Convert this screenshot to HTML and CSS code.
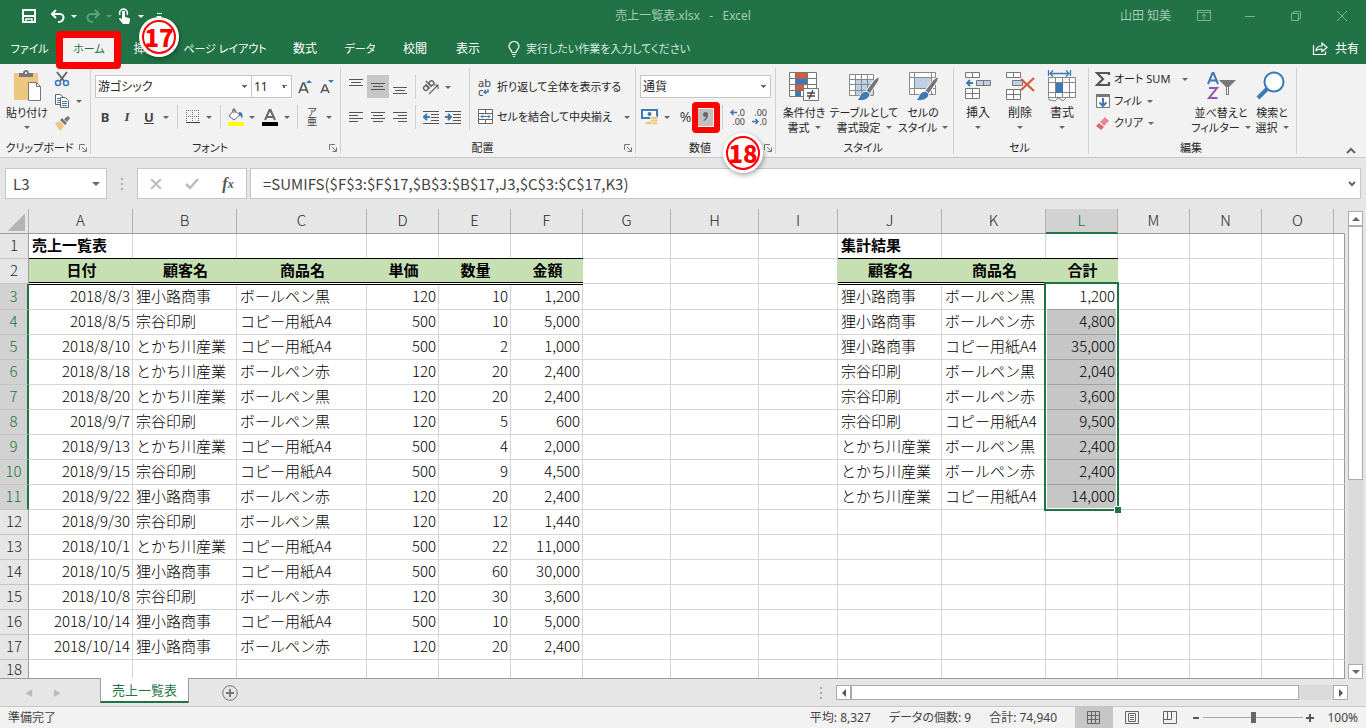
FILE: index.html
```html
<!DOCTYPE html>
<html lang="ja">
<head>
<meta charset="utf-8">
<title>売上一覧表.xlsx - Excel</title>
<link rel="stylesheet" href="styles.css">
</head>
<body>
<header class="top">
  <div class="titlebar">
    <div class="quick">
      <button class="w24" aria-label="上書き保存"><svg width="16" height="16" fill="none" stroke="#fff" stroke-width="2"><path d="M2 2h12v12H2z"/><path d="M2 8h12" /><path d="M5 15v-4h6v4" stroke-width="1.5"/></svg></button>
      <button class="w24 undo" aria-label="元に戻す"><svg width="16" height="16" fill="none" stroke="#fff" stroke-width="2"><path d="M6 2 2 6l4 4M2 6h8c5 0 5 8-2 8"/></svg></button>
      <button class="w8" aria-label="履歴"><i class="caret light"></i></button>
      <button class="w24 redo dim" aria-label="やり直し"><svg width="16" height="16" fill="none" stroke="#fff" stroke-width="2"><path d="M10 2l4 4-4 4M14 6H6c-5 0-5 8 2 8"/></svg></button>
      <button class="w8 dim" aria-label="やり直し履歴"><i class="caret light"></i></button>
      <button class="w22" aria-label="タッチ/マウス モード"><svg width="14" height="18"><path d="M3 8a4 4 0 1 1 7 0" fill="none" stroke="#fff" stroke-width="1.5"/><path d="M5 5c0-1.600 3-1.600 3 0v5l4 1c1 .3 1 1 1 2l-1 4H6l-4-5c0-1 1-1.500 3 0z" fill="#fff"/></svg></button>
      <button class="w12" aria-label="モードの選択"><i class="caret light"></i></button>
      <button class="w24 more" aria-label="その他"><span></span><i class="caret light"></i></button>
    </div>
    <div class="title">売上一覧表.xlsx&nbsp;&nbsp; -&nbsp;&nbsp; Excel</div>
    <div class="window">
      <span class="user">山田 知美</span>
      <button aria-label="リボンの表示オプション"><svg width="14" height="12" fill="none" stroke="#7fb093"><path d="M.5.5h13v10H.5zM.5 2.500h13M7 9.500v-5M4.500 6.500 7 4l2.500 2.500"/></svg></button>
      <button aria-label="最小化"><svg width="12" height="12" stroke="#7fb093"><path d="M1 6.500h10"/></svg></button>
      <button aria-label="元に戻す(縮小)"><svg width="12" height="12" fill="none" stroke="#7fb093"><path d="M1.500 3.500h7v7h-7zM3.500 3V1.500h7v7H9"/></svg></button>
      <button aria-label="閉じる"><svg width="12" height="12" stroke="#7fb093"><path d="M1 1l10 10M11 1 1 11"/></svg></button>
    </div>
  </div>
  <nav class="tabs">
    <a href="#" class="kana">ファイル</a><a href="#" class="active kana">ホーム</a><a href="#">挿入</a><a href="#" class="kana">ページ レイアウト</a><a href="#">数式</a><a href="#" class="kana">データ</a><a href="#">校閲</a><a href="#">表示</a>
    <a href="#" class="tell kana"><svg width="12" height="16" fill="none" stroke="#fff"><path d="M4 11.500C4 9 1 8 1 5.500a5 5 0 0 1 10 0C11 8 8 9 8 11.500zM4 13.500h4M5 15.500h2" stroke-width="1.200"/></svg>実行したい作業を入力してください</a>
    <a href="#" class="share"><svg width="16" height="15" fill="none" stroke="#fff"><path d="M1.500 4v9.500h12v-3M4 10c0-4 3-5 6-5V2l5 4.500-5 4V8C7 8 5 8 4 10z" stroke-width="1.200"/></svg>共有</a>
  </nav>
</header>

<section class="ribbon">
  <div class="group g-clip">
    <div class="body">
      <button class="big clip"><svg width="32" height="32"><path d="M3 3h24v27H3z" fill="#edc77f"/><path d="M8 3h4c0-4 6-4 6 0h4v4H8z" fill="#777"/><circle cx="15" cy="3" r="1" fill="#fff"/><path d="M17.500 12.500h8l4 4v14h-12z" fill="#fff" stroke="#777"/><path d="M25.500 12.500v4h4" fill="none" stroke="#777"/></svg><span>貼り付け</span><i class="caret"></i></button>
      <div class="stack">
        <div class="srow"><button class="w24" aria-label="切り取り"><svg width="16" height="16" fill="none"><path d="M3 1l7 9M13 1 6 10" stroke="#666" stroke-width="2"/><circle cx="4" cy="12" r="2.500" stroke="#3d7ab5" stroke-width="1.500"/><circle cx="12" cy="12" r="2.500" stroke="#3d7ab5" stroke-width="1.500"/></svg></button></div>
        <div class="srow"><button class="w24" aria-label="コピー"><svg width="16" height="16" fill="#fff" stroke="#666"><path d="M1.500 1.500h5l3 3v7h-8z"/><path d="M3 5.500h3M3 7.500h3M3 9.500h3" stroke="#3d7ab5"/><path d="M6.500 4.500h5l3 3v7h-8z"/><path d="M8 8.500h5M8 10.500h5M8 12.500h5" stroke="#3d7ab5"/></svg></button><button class="w10" aria-label="コピーのオプション"><i class="caret"></i></button></div>
        <div class="srow"><button class="w24" aria-label="書式のコピー"><svg width="16" height="16"><path d="M1 8l5-2 4 5-4 5z" fill="#edc77f"/><path d="M6 5l5 5 2-2-5-5zM10 4l4-3 2 2-3 4z" fill="#777"/></svg></button></div>
      </div>
    </div>
    <div class="label"><span>クリップボード</span><svg class="launch" width="8" height="8" fill="none" stroke="#777"><path d="M.5 6V.5H6M3 3l4 4M7.500 3.500v4h-4"/></svg></div>
  </div>

  <div class="group g-font">
    <div class="body rows">
      <div class="row">
        <select class="combo name" aria-label="フォント"><option>游ゴシック</option></select><select class="combo size" aria-label="フォント サイズ"><option>11</option></select>
        <button class="w24 grow" aria-label="フォント サイズの拡大"><svg width="16" height="16"><path d="M2 14 6 4h1l4 10M3.500 11h6" fill="none" stroke="#555" stroke-width="1.700"/><path d="M9 4l3-3 3 3z" fill="#3d7ab5"/></svg></button><button class="w20" aria-label="フォント サイズの縮小"><svg width="16" height="16"><path d="M2 14 5.500 6h1L10 14M3.500 11.500h5" fill="none" stroke="#555" stroke-width="1.500"/><path d="M9 1h6l-3 3z" fill="#3d7ab5"/></svg></button>
      </div>
      <div class="row">
        <button class="w22 b">B</button><button class="w22 it">I</button><button class="w22 u">U</button><button class="w12" aria-label="下線の種類"><i class="caret"></i></button><i class="sep w10"></i>
        <button class="w22" aria-label="罫線"><svg width="14" height="14" stroke="#777"><path d="M.5 0v12M6.500 0v12M12.500 0v12M0 .5h13M0 6.500h13" stroke-dasharray="1 1"/><path d="M0 12.500h14" stroke="#444"/></svg></button><button class="w10" aria-label="罫線の種類"><i class="caret"></i></button><i class="sep w12"></i>
        <button class="w20" aria-label="塗りつぶしの色"><svg width="18" height="18"><path d="M7 2l6 5-6 5-5-4z" fill="#fff" stroke="#666"/><path d="M6 5V1h2v4" fill="none" stroke="#666"/><path d="M12 4c4 0 4 3 3 7-1-3-2-4-3-4z" fill="#3d7ab5"/><path d="M1 14h16v4H1z" fill="#ff0"/></svg></button><button class="w12" aria-label="塗りつぶしの色を選択"><i class="caret"></i></button>
        <button class="w24" aria-label="フォントの色"><svg width="18" height="18"><path d="M4 12 8.500 2h1L14 12M5.500 9h7" fill="none" stroke="#666" stroke-width="2"/><path d="M1 14h16v4H1z"/></svg></button><button class="w10" aria-label="フォントの色を選択"><i class="caret"></i></button><i class="sep w10"></i>
        <button class="w20 ruby"><span>ア</span><span>亜</span></button><button class="w14" aria-label="ふりがなの設定"><i class="caret"></i></button>
      </div>
    </div>
    <div class="label"><span>フォント</span><svg class="launch" width="8" height="8" fill="none" stroke="#777"><path d="M.5 6V.5H6M3 3l4 4M7.500 3.500v4h-4"/></svg></div>
  </div>

  <div class="group g-align">
    <div class="body">
      <div class="rows left">
        <div class="row">
          <button class="w22" aria-label="上揃え"><svg width="14" height="16" stroke="#555"><path d="M0 .5h14M2 3.500h10M0 6.500h14"/></svg></button><button class="w22 on" aria-label="上下中央揃え"><svg width="14" height="16" stroke="#555"><path d="M0 4.500h14M2 7.500h10M0 10.500h14"/></svg></button><button class="w22" aria-label="下揃え"><svg width="14" height="16" stroke="#555"><path d="M0 8.500h14M2 11.500h10M0 14.500h14"/></svg></button><i class="sep w8"></i>
          <button class="w22 gap" aria-label="方向"><svg width="18" height="18" fill="none" stroke="#666" stroke-width="1.500"><g transform="rotate(-45 6 8)"><circle cx="3" cy="8" r="2.300"/><path d="M5.500 5v6M8 3v8"/><circle cx="10.500" cy="8.500" r="2.300"/></g><path d="M7 16 16 7M12 7h4v4" stroke-width="1.200"/></svg></button><button class="w12" aria-label="方向の設定"><i class="caret"></i></button>
        </div>
        <div class="row">
          <button class="w22" aria-label="左揃え"><svg width="14" height="12" stroke="#555"><path d="M0 1.500h14M0 4.500h9M0 7.500h14M0 10.500h9"/></svg></button><button class="w22" aria-label="中央揃え"><svg width="14" height="12" stroke="#555"><path d="M0 1.500h14M2 4.500h10M0 7.500h14M2 10.500h10"/></svg></button><button class="w22" aria-label="右揃え"><svg width="14" height="12" stroke="#555"><path d="M0 1.500h14M5 4.500h9M0 7.500h14M5 10.500h9"/></svg></button><i class="sep w8"></i>
          <button class="w22 gap" aria-label="インデントを減らす"><svg width="16" height="14" stroke="#555"><path d="M0 1.500h16M8 4.500h8M8 7.500h8M8 10.500h8M0 13.500h16"/><path d="M7 7H1M4 4 1 7l3 3" fill="none" stroke="#3d7ab5" stroke-width="2"/></svg></button><button class="w22" aria-label="インデントを増やす"><svg width="16" height="14" stroke="#555"><path d="M0 1.500h16M8 4.500h8M8 7.500h8M8 10.500h8M0 13.500h16"/><path d="M0 7h6M3 4l3 3-3 3" fill="none" stroke="#3d7ab5" stroke-width="2"/></svg></button>
        </div>
      </div>
      <div class="rows right">
        <div class="row"><button class="wide"><span class="abc"><span>ab</span><span>c<svg width="6" height="6" fill="none" stroke="#3d7ab5" stroke-width="1.300"><path d="M5 0v3H1M3 1 1 3l2 2"/></svg></span></span>折り返して全体を表示する</button></div>
        <div class="row"><button class="wide"><svg width="16" height="16" fill="#fff" stroke="#666"><path d="M.5.5h14v14H.5zM.5 4.500h14M.5 10.500h14M7.500.5v4M7.500 10.500v4"/><path d="M3 7.500h9M5 5.500l-2 2 2 2M10 5.500l2 2-2 2" fill="none" stroke="#3d7ab5"/></svg>セルを結合して中央揃え</button><button class="w10 last" aria-label="結合の種類"><i class="caret"></i></button></div>
      </div>
    </div>
    <div class="label"><span>配置</span><svg class="launch" width="8" height="8" fill="none" stroke="#777"><path d="M.5 6V.5H6M3 3l4 4M7.500 3.500v4h-4"/></svg></div>
  </div>

  <div class="group g-num">
    <div class="body rows">
      <div class="row"><select class="combo fmt" aria-label="数値の書式"><option>通貨</option></select></div>
      <div class="row">
        <button class="w22" aria-label="通貨表示形式"><svg width="18" height="18"><path d="M1 2h15v8H1z" fill="#fff" stroke="#3d7ab5" stroke-width="2"/><circle cx="8.500" cy="6" r="2" fill="#3d7ab5"/><g fill="#edc77f" stroke="#f2f2f2" stroke-width=".7"><ellipse cx="13" cy="15" rx="4" ry="1.800"/><ellipse cx="13" cy="12.500" rx="4" ry="1.800"/><ellipse cx="13" cy="10" rx="4" ry="1.800"/><ellipse cx="8" cy="15" rx="4" ry="1.800"/></g></svg></button><button class="w12" aria-label="通貨の選択"><i class="caret"></i></button><button class="pct">%</button><button class="comma" aria-label="桁区切りスタイル"><svg width="6" height="10"><path d="M0 2.500a2.500 2.500 0 0 1 5 0c0 3-1 5-4 6.500l-.5-1C2 7 3 6 3 5 1 5.200 0 4 0 2.500z" fill="#666"/></svg></button><i class="sep w8"></i>
        <button class="w22 dec" aria-label="小数点以下の表示桁数を増やす"><span><svg width="7" height="7" fill="none" stroke="#3d7ab5" stroke-width="1.500"><path d="M7 3.500H1M3.500 1 1 3.500 3.500 6"/></svg>.0</span><span>.00</span></button><button class="w22 dec" aria-label="小数点以下の表示桁数を減らす"><span>.00</span><span><svg width="7" height="7" fill="none" stroke="#3d7ab5" stroke-width="1.500"><path d="M0 3.500h6M3.500 1 6 3.500 3.500 6"/></svg>.0</span></button>
      </div>
    </div>
    <div class="label"><span>数値</span><svg class="launch" width="8" height="8" fill="none" stroke="#777"><path d="M.5 6V.5H6M3 3l4 4M7.500 3.500v4h-4"/></svg></div>
  </div>

  <div class="group g-style">
    <div class="body">
      <button class="big s1"><svg width="32" height="32"><path d="M1.500 2.500h27v24h-27z" fill="#fff"/><path d="M8 3h11v5H8zM8 14h8v6H8z" fill="#d65b3b"/><path d="M8 8h11v6H8zM8 20h5v6H8z" fill="#3d7ab5"/><path d="M1.500 2.500h27v24h-27zM7.500 2v24M19.500 2v24M1 8.500h27M1 14.500h27M1 20.500h27" fill="none" stroke="#777"/><path d="M15.500 18.500h15v12h-15z" fill="#fff" stroke="#777"/><path d="M19 23h8M19 26h8M25 20l-4 9" stroke="#444" stroke-width="1.300"/></svg><span>条件付き</span><span>書式<i class="caret"></i></span></button>
      <button class="big s2"><svg width="32" height="32"><path d="M1.500 4.500h24v21h-24z" fill="#fff"/><path d="M8 10h18v15H8z" fill="#bcd1e8"/><path d="M1.500 4.500h24v21h-24zM7.500 4v21M13.500 4v21M19.500 4v21M1 9.500h24M1 14.500h24M1 20.500h24" fill="none" stroke="#888"/><path d="M30 7c2 0 1 3 0 5l-9 13-4-3 9-12z" fill="#777" stroke="#fff"/><path d="M20 22c3 2 2 4 0 6-3 3-8 3-12 2 4-1 3-4 5-6 2-3 5-3 7-2z" fill="#3d7ab5" stroke="#fff"/></svg><span>テーブルとして</span><span>書式設定<i class="caret"></i></span></button>
      <button class="big s3"><svg width="32" height="32"><path d="M2.500 2.500h26v22h-26z" fill="#fff"/><path d="M8 8h16v11H8z" fill="#bcd1e8"/><path d="M2.500 2.500h26v22h-26zM7.500 2v22M24.500 2v22M2 7.500h26M2 18.500h26" fill="none" stroke="#888"/><path d="M30 7c2 0 1 3 0 5l-9 13-4-3 9-12z" fill="#777" stroke="#fff"/><path d="M20 22c3 2 2 4 0 6-3 3-8 3-12 2 4-1 3-4 5-6 2-3 5-3 7-2z" fill="#3d7ab5" stroke="#fff"/></svg><span>セルの</span><span>スタイル<i class="caret"></i></span></button>
    </div>
    <div class="label"><span>スタイル</span></div>
  </div>

  <div class="group g-cell">
    <div class="body">
      <button class="big c1"><svg width="32" height="32"><path d="M3.500 2.500h14v5h-14zM10.500 2v5M3.500 18.500h14v10h-14zM10.500 18v10M3 23.500h14" fill="#fff" stroke="#777"/><path d="M14.500 10.500h14v5h-14zM21.500 10v5" fill="#bcd1e8" stroke="#777"/><path d="M11 13H5M8 10l-3 3 3 3" fill="none" stroke="#3d7ab5" stroke-width="1.800"/></svg><span>挿入</span><i class="caret"></i></button>
      <button class="big c1"><svg width="32" height="32"><path d="M2.500 2.500h14v5h-14zM9.500 2v5M2.500 19.500h14v10h-14zM9.500 19v10M2 24.500h14" fill="#fff" stroke="#777"/><path d="M8.500 10.500h10v5h-10z" fill="#bcd1e8" stroke="#777"/><path d="M17 9l13 12M30 8 17 20" stroke="#d65b3b" stroke-width="2.300"/></svg><span>削除</span><i class="caret"></i></button>
      <button class="big c1"><svg width="32" height="32"><path d="M2.500 0v6M24.500 0v6M4 3.500h19M7 .5l-3 3 3 3M20 .5l3 3-3 3" fill="none" stroke="#3d7ab5" stroke-width="1.300"/><path d="M2.500 7.500h27v20h-27z" fill="#fff"/><path d="M2.500 7.500h27v20h-27zM9.500 7v20M16.500 7v20M23.500 7v20M2 12.500h27M2 22.500h27M3 27v3l6 1 3-3 5 3 3-3" fill="none" stroke="#888"/><path d="M10 13h7v10h-7z" fill="#3d7ab5"/></svg><span>書式</span><i class="caret"></i></button>
    </div>
    <div class="label"><span>セル</span></div>
  </div>

  <div class="group g-edit">
    <div class="body">
      <div class="stack edit">
        <div class="srow"><button class="txt"><svg width="16" height="16"><path d="M14 4V2H2l6 6-6 6h12v-3" fill="none" stroke="#555" stroke-width="2.200"/></svg>オート SUM</button><button class="w12" aria-label="オート SUM の種類"><i class="caret"></i></button></div>
        <div class="srow"><button class="txt"><svg width="16" height="16"><path d="M1.500 1.500h13v13h-13z" fill="#fff" stroke="#777"/><path d="M1 1h14v3H1z" fill="#777"/><path d="M8 5v8M4.500 9.500 8 13l3.500-3.500" fill="none" stroke="#3d7ab5" stroke-width="2"/></svg>フィル<i class="caret"></i></button></div>
        <div class="srow"><button class="txt"><svg width="16" height="16"><path d="M1 11l3-3 5 4-3 3z" fill="#d96a7e"/><path d="M5 7l5-5 4 4-5 5z" fill="#e8869a"/></svg>クリア<i class="caret"></i></button></div>
      </div>
      <button class="big e1"><svg width="32" height="32" fill="none"><path d="M3 14 7.500 3h1L13 14M5 10.500h6" stroke="#3d7ab5" stroke-width="2"/><path d="M4 18h8l-8 10h8.500" stroke="#8e56b3" stroke-width="2"/><path d="M14 10h17l-7 7v8h-3v-8z" fill="#777"/><path d="M22.500 17v7" stroke="#fff"/></svg><span>並べ替えと</span><span>フィルター<i class="caret"></i></span></button>
      <button class="big e2"><svg width="32" height="32"><circle cx="18" cy="12" r="9.500" fill="#fff" stroke="#3d7ab5" stroke-width="2"/><path d="M11 19 2 28" stroke="#3d7ab5" stroke-width="4"/></svg><span>検索と</span><span>選択<i class="caret"></i></span></button>
    </div>
    <div class="label"><span>編集</span></div>
  </div>
  <button class="collapse" aria-label="リボンを折りたたむ"><svg width="10" height="7" fill="none" stroke="#666" stroke-width="2"><path d="M1 6l4-4 4 4"/></svg></button>
</section>

<section class="formula">
  <div class="box namebox"><input value="L3" aria-label="名前ボックス"><button aria-label="名前の一覧"><i class="caret wide-caret"></i></button></div>
  <span class="dots"></span>
  <div class="box fx">
    <button aria-label="キャンセル"><svg width="12" height="12" stroke="#bbb" stroke-width="1.800"><path d="M1 1l10 10M11 1 1 11"/></svg></button><button aria-label="入力"><svg width="14" height="12" fill="none" stroke="#bbb" stroke-width="2.500"><path d="M1 6l4 4 8-9"/></svg></button><button class="fxb" aria-label="関数の挿入">f<small>x</small></button>
  </div>
  <div class="box expr"><input value="=SUMIFS($F$3:$F$17,$B$3:$B$17,J3,$C$3:$C$17,K3)" aria-label="数式バー"><button aria-label="数式バーの展開"><svg width="8" height="6" fill="none" stroke="#666" stroke-width="2"><path d="M1 1l3 3 3-3"/></svg></button></div>
</section>

<main class="sheet">
  <div class="viewport">
  <table>
    <colgroup><col class="k0"><col class="k104"><col class="k104"><col class="k130"><col class="k72"><col class="k72"><col class="k72"><col class="k88"><col class="k88"><col class="k79"><col class="k104"><col class="k104"><col class="k72"><col class="k72"><col class="k72"><col class="k72"><col></colgroup>
    <thead><tr><th class="corner"><th>A<th>B<th>C<th>D<th>E<th>F<th>G<th>H<th>I<th>J<th>K<th class="cur">L<th>M<th>N<th>O<th></tr></thead>
    <tbody>
    <tr class="r1"><th>1<td class="t ln">売上一覧表<td class="ln"><td class="ln"><td class="ln"><td class="ln"><td class="ln"><td><td><td><td class="t ln">集計結果<td class="ln"><td class="ln"><td><td><td><td></tr>
    <tr class="r2"><th>2<td class="h">日付<td class="h">顧客名<td class="h">商品名<td class="h">単価<td class="h">数量<td class="h">金額<td><td><td><td class="h">顧客名<td class="h">商品名<td class="h">合計<td><td><td><td></tr>
    <tr class="r3 s"><th>3<td class="n">2018/8/3<td>狸小路商事<td>ボールペン黒<td class="n">120<td class="n">10<td class="n">1,200<td><td><td><td>狸小路商事<td>ボールペン黒<td class="n first">1,200<div class="range"></div><td><td><td><td></tr>
    <tr class="s"><th>4<td class="n">2018/8/5<td>宗谷印刷<td>コピー用紙A4<td class="n">500<td class="n">10<td class="n">5,000<td><td><td><td>狸小路商事<td>ボールペン赤<td class="n q">4,800<td><td><td><td></tr>
    <tr class="s"><th>5<td class="n">2018/8/10<td>とかち川産業<td>コピー用紙A4<td class="n">500<td class="n">2<td class="n">1,000<td><td><td><td>狸小路商事<td>コピー用紙A4<td class="n q">35,000<td><td><td><td></tr>
    <tr class="s"><th>6<td class="n">2018/8/18<td>とかち川産業<td>ボールペン赤<td class="n">120<td class="n">20<td class="n">2,400<td><td><td><td>宗谷印刷<td>ボールペン黒<td class="n q">2,040<td><td><td><td></tr>
    <tr class="s"><th>7<td class="n">2018/8/20<td>とかち川産業<td>ボールペン黒<td class="n">120<td class="n">20<td class="n">2,400<td><td><td><td>宗谷印刷<td>ボールペン赤<td class="n q">3,600<td><td><td><td></tr>
    <tr class="s"><th>8<td class="n">2018/9/7<td>宗谷印刷<td>ボールペン黒<td class="n">120<td class="n">5<td class="n">600<td><td><td><td>宗谷印刷<td>コピー用紙A4<td class="n q">9,500<td><td><td><td></tr>
    <tr class="s"><th>9<td class="n">2018/9/13<td>とかち川産業<td>コピー用紙A4<td class="n">500<td class="n">4<td class="n">2,000<td><td><td><td>とかち川産業<td>ボールペン黒<td class="n q">2,400<td><td><td><td></tr>
    <tr class="s"><th>10<td class="n">2018/9/15<td>宗谷印刷<td>コピー用紙A4<td class="n">500<td class="n">9<td class="n">4,500<td><td><td><td>とかち川産業<td>ボールペン赤<td class="n q">2,400<td><td><td><td></tr>
    <tr class="s"><th>11<td class="n">2018/9/22<td>狸小路商事<td>ボールペン赤<td class="n">120<td class="n">20<td class="n">2,400<td><td><td><td>とかち川産業<td>コピー用紙A4<td class="n q">14,000<td><td><td><td></tr>
    <tr><th>12<td class="n">2018/9/30<td>宗谷印刷<td>ボールペン黒<td class="n">120<td class="n">12<td class="n">1,440<td><td><td><td><td><td><td><td><td><td></tr>
    <tr><th>13<td class="n">2018/10/1<td>とかち川産業<td>コピー用紙A4<td class="n">500<td class="n">22<td class="n">11,000<td><td><td><td><td><td><td><td><td><td></tr>
    <tr><th>14<td class="n">2018/10/5<td>狸小路商事<td>コピー用紙A4<td class="n">500<td class="n">60<td class="n">30,000<td><td><td><td><td><td><td><td><td><td></tr>
    <tr><th>15<td class="n">2018/10/8<td>宗谷印刷<td>ボールペン赤<td class="n">120<td class="n">30<td class="n">3,600<td><td><td><td><td><td><td><td><td><td></tr>
    <tr><th>16<td class="n">2018/10/14<td>狸小路商事<td>コピー用紙A4<td class="n">500<td class="n">10<td class="n">5,000<td><td><td><td><td><td><td><td><td><td></tr>
    <tr><th>17<td class="n">2018/10/14<td>狸小路商事<td>ボールペン赤<td class="n">120<td class="n">20<td class="n">2,400<td><td><td><td><td><td><td><td><td><td></tr>
    <tr class="end"><th>18<td><td><td><td><td><td><td><td><td><td><td><td><td><td><td><td></tr>
    </tbody>
  </table>
  </div>
  <div class="vscroll"><button class="sb" aria-label="上へ"><i class="caret up"></i></button><div class="track"><div class="thumb"></div></div><button class="sb" aria-label="下へ"><i class="caret wide-caret"></i></button></div>
</main>

<section class="sheetbar">
  <button class="nav" aria-label="前のシート">◀</button><button class="nav" aria-label="次のシート">▶</button>
  <button class="sheettab">売上一覧表</button>
  <button class="add" aria-label="新しいシート"><svg width="16" height="16" fill="none" stroke="#777"><circle cx="8" cy="8" r="7.300"/><path d="M4 8h8M8 4v8" stroke-width="2"/></svg></button>
  <span class="dots hd"></span>
  <div class="hscroll"><button class="sb" aria-label="左へ"><i class="caret lt"></i></button><div class="htrack"><div class="hthumb"></div></div><button class="sb" aria-label="右へ"><i class="caret rt"></i></button></div>
</section>

<footer class="status">
  <span>準備完了</span>
  <div class="stats"><span>平均: 8,327</span><span>データの個数: 9</span><span>合計: 74,940</span></div>
  <button class="view on" aria-label="標準"><svg width="14" height="14" fill="none" stroke="#666"><path d="M.5.5h12v12H.5zM4.500 0v13M8.500 0v13M0 4.500h13M0 8.500h13"/></svg></button><button class="view" aria-label="ページ レイアウト"><svg width="14" height="14" fill="none" stroke="#666"><path d="M.5.5h13v12H.5zM3.500 2.500h7v8h-7zM5 4.500h4M5 6.500h4M5 8.500h4"/></svg></button><button class="view" aria-label="改ページ プレビュー"><svg width="14" height="14" fill="none" stroke="#666"><path d="M.5.5h13v12H.5zM.5 8.500h8V.5M4.500 0v8"/></svg></button>
  <button class="z" aria-label="縮小"><svg width="8" height="8" stroke="#555" stroke-width="2"><path d="M1 4h6"/></svg></button><input type="range" min="10" max="190" value="100" aria-label="ズーム"><button class="z" aria-label="拡大"><svg width="8" height="8" stroke="#555" stroke-width="2"><path d="M0 4h8M4 0v8"/></svg></button>
  <span class="pc">100%</span>
</footer>

<div class="frame f17"></div><div class="badge b17">17</div>
<div class="frame f18"></div><div class="badge b18">18</div>
</body>
</html>
```

FILE: styles.css
```css
* { box-sizing: border-box; }
body {
  margin: 0;
  height: 100vh;
  display: flex;
  flex-direction: column;
  position: relative;
  overflow: hidden;
  background: #e6e6e6;
  color: #262626;
  font: 12px/16px "Noto Sans", "Noto Sans CJK JP", sans-serif;
  font-feature-settings: "palt";
}
button, input, select { font: inherit; color: inherit; font-feature-settings: inherit; }
button {
  border: 0;
  padding: 0;
  background: none;
  display: flex;
  align-items: center;
  justify-content: center;
  white-space: nowrap;
  flex: none;
}
svg { flex: none; }
a { color: inherit; text-decoration: none; }
.caret { display: block; width: 0; height: 0; border: 3px solid transparent; border-top-color: #666; border-bottom: 0; flex: none; }
.caret.light { border-width: 3px; border-bottom: 0; border-top-color: #fff; }
.caret.up { border: 4px solid transparent; border-top: 0; border-bottom-color: #666; }
.caret.lt { border: 4px solid transparent; border-left: 0; border-right-color: #555; }
.caret.rt { border: 4px solid transparent; border-right: 0; border-left-color: #555; }
.wide-caret { border-width: 4px; border-bottom: 0; }
.w8 { width: 8px; }
.w10 { width: 10px; }
.w12 { width: 12px; }
.w14 { width: 14px; }
.w20 { width: 20px; }
.w22 { width: 22px; }
.w24 { width: 24px; }

/* title bar and tabs */
.top { flex: none; background: #217346; color: #fff; }
.titlebar { height: 32px; display: grid; grid-template-columns: 1fr auto 1fr; align-items: center; }
.quick { display: flex; align-items: center; padding-left: 17px; }
.undo { margin-left: 5px; }
.redo { margin-left: 3px; }
.dim { opacity: .3; }
.more { flex-direction: column; gap: 2px; }
.more span { width: 5px; height: 1px; background: #fff; }
.title { color: #a6cab5; white-space: pre; }
.window { display: flex; align-items: center; justify-content: flex-end; padding-right: 1px; }
.window button { width: 46px; height: 24px; }
.user { color: #a6cab5; margin-right: 10px; }
.tabs { height: 32px; display: grid; grid-template-columns: 59px 60px 53px 106px 54px 56px 54px 52px auto 1fr; align-items: stretch; }
.tabs a { display: flex; align-items: center; justify-content: center; white-space: nowrap; padding-top: 1px; }
.tabs .kana { font-size: 11px; }
.tabs .active { background: #f2f2f2; color: #217346; margin-top: 4px; padding-bottom: 4px; }
.tabs .tell { gap: 6px; padding-left: 14px; color: #d9ebe0; }
.tabs .share { justify-content: flex-end; gap: 7px; padding-right: 7px; }

/* ribbon */
.ribbon { flex: none; height: 94px; display: flex; padding: 4px 0 3px; background: #f2f2f2; border-bottom: 1px solid #c8c8c8; }
.group { flex: none; display: flex; flex-direction: column; border-right: 1px solid #d0d0d0; }
.g-clip { width: 91px; }
.g-font { width: 250px; }
.g-align { width: 295px; }
.g-num { width: 140px; }
.g-style { width: 178px; }
.g-cell { width: 135px; }
.g-edit { width: 208px; }
.body { flex: 1; display: flex; }
.label { height: 12px; font-size: 11px; line-height: 12px; display: flex; align-items: center; padding-right: 3px; }
.label span { flex: 1; text-align: center; white-space: nowrap; }
.rows { display: flex; flex-direction: column; gap: 6px; padding-top: 7px; }
.row { display: flex; height: 24px; }
.g-font .rows, .g-num .rows { padding-left: 3px; }
.sep { display: block; background: linear-gradient(#d0d0d0, #d0d0d0) center / 1px 100% no-repeat; }
.combo {
  appearance: none;
  height: 23px;
  padding: 0 2px;
  border: 1px solid #c6c6c6;
  border-radius: 0;
  background:
    linear-gradient(225deg, transparent 50%, #666 50%) right 4px center / 3px 3px no-repeat,
    linear-gradient(135deg, transparent 50%, #666 50%) right 7px center / 3px 3px no-repeat, #fff;
  background:
    conic-gradient(from -45deg at 50% 100%, #666 90deg, transparent 0) right 4px center / 6px 3px no-repeat, #fff;
}
.name { width: 157px; margin-left: 1px; }
.size { width: 41px; margin-left: -1px; }
.fmt { width: 131px; margin-left: 1px; }
.grow { margin-left: 1px; }
.b, .it, .u { color: #444; font-size: 13px; font-weight: 700; }
.it { font-family: "Liberation Serif", serif; font-style: italic; }
.u { text-decoration: underline; }
.ruby { flex-direction: column; font-size: 10px; line-height: 9px; color: #444; }
.left { width: 128px; padding-left: 4px; }
.gap { margin-left: 1px; }
.on { background: #c6c6c6; }
.left .on { height: 23px; }
.right { padding-left: 8px; border-left: 1px solid #d0d0d0; height: 62px; }
.wide { gap: 3px; justify-content: flex-start; font-size: 11px; }
.last { margin-left: auto; }
.right .row { width: 154px; }
.abc { width: 16px; font: 11px/9px "Noto Sans", sans-serif; color: #444; }
.abc span { display: flex; align-items: center; }
.pct { width: 25px; font-size: 14px; color: #444; }
.comma { width: 15px; height: 17px; align-self: center; background: #c0c0c0; }
.dec { flex-direction: column; align-items: flex-end; padding-right: 3px; font-size: 9px; line-height: 9px; color: #444; }
.dec span { display: flex; align-items: center; }
.g-num .sep { margin-left: 5px; }
.big { flex-direction: column; justify-content: flex-start; font-size: 11px; line-height: 15px; padding-top: 2px; }
.big svg { margin-bottom: 3px; }
.big span { display: flex; align-items: center; gap: 5px; }
.big > .caret { margin-top: 6px; }
.clip { width: 50px; padding-left: 4px; }
.stack { display: flex; flex-direction: column; }
.srow { display: flex; height: 22px; }
.g-style .body { padding-left: 1px; }
.s1 { width: 54px; }
.s2 { width: 66px; }
.s3 { width: 52px; }
.g-cell .body { padding-left: 3px; }
.c1 { width: 42px; font-size: 12px; }
.edit { width: 96px; }
.g-edit .body { padding-left: 6px; }
.edit .srow { justify-content: space-between; }
.txt { gap: 3px; font-size: 11px; }
.txt .caret { margin-left: 2px; }
.e1 { width: 60px; }
.e2 { width: 42px; }
.collapse { margin: auto 10px 0 auto; }

/* formula bar */
.formula { flex: none; height: 51px; display: flex; align-items: center; padding: 0 5px; font: 15px/20px "Noto Sans CJK JP", sans-serif; color: #444; }
.box { display: flex; height: 31px; background: #fff; border: 1px solid #c6c6c6; }
.box input { border: 0; padding: 0; background: none; min-width: 0; flex: 1; outline: 0; }
.namebox { width: 102px; padding-left: 7px; }
.namebox button { width: 20px; }
.dots { width: 30px; height: 12px; background: repeating-linear-gradient(#aaa 0 2px, transparent 2px 5px) center / 2px 12px no-repeat; }
.fx { width: 110px; justify-content: space-around; }
.fx button { width: 34px; }
.fx .fxb { font: italic 700 16px/16px "Liberation Serif", serif; color: #555; }
.fxb small { font-size: 12px; }
.expr { flex: 1; margin-left: 3px; padding-left: 12px; }
.expr input { font-feature-settings: normal; }
.expr button { width: 17px; }

/* worksheet */
.sheet { flex: 1; min-height: 0; display: flex; }
.viewport { flex: 1; min-width: 0; overflow: hidden; border-bottom: 1px solid #9b9b9b; }
table { width: 100%; table-layout: fixed; border-collapse: separate; border-spacing: 0; font: 15px/20px "Noto Sans CJK JP", sans-serif; font-feature-settings: normal; color: #000; font-weight: 300; }
.k0 { width: 29px; }
.k72 { width: 72px; }
.k79 { width: 79px; }
.k88 { width: 88px; }
.k104 { width: 104px; }
.k130 { width: 130px; }
tr { height: 25px; }
.r3 { height: 26px; }
th, td { padding: 0 0 2px; border-right: 1px solid #d4d4d4; border-bottom: 1px solid #d4d4d4; white-space: nowrap; font-weight: inherit; }
td { background: #fff; padding: 0 2px 2px 3px; line-height: 20px; }
thead th { border-bottom-color: #9b9b9b; border-right-color: #b1b1b1; color: #262626; }
thead th:last-child { border-right-color: transparent; }
tbody th { border-right-color: #9b9b9b; border-bottom-color: #c4c4c4; color: #262626; }
td:last-child { border-right-color: #9b9b9b; }
.corner { background: linear-gradient(135deg, transparent 50%, #b4b4b4 50%) 8px 5px / 17px 17px no-repeat; }
.cur { background: #d2d2d2; color: #217346; border-bottom: 2px solid #217346; padding-bottom: 1px; }
.s th { background: #d2d2d2; color: #217346; border-right: 2px solid #217346; }
.t { font-weight: 700; }
.ln { border-bottom-color: #000; }
.h { text-align: center; font-weight: 700; background: #c6e0b4; border-right: 0; border-bottom-color: #fff; box-shadow: inset 0 -1px #000, 0 -1px #000; }
.n { text-align: right; }
.r3 td:nth-child(-n+7), .r3 td:nth-child(11), .r3 td:nth-child(12) { border-right: 0; padding-right: 3px; box-shadow: inset 0 1px #000, inset -1px 0 #d4d4d4; }
.q { background: #c6c6c6; border-bottom-color: #a0a0a0; }
.first { position: relative; border-bottom-color: #a0a0a0; }
.range { position: absolute; left: -2px; right: -2px; top: -2px; height: 229px; border: 2px solid #217346; box-shadow: inset 0 0 0 1px #fff; }
.range::after { content: ""; position: absolute; right: -4px; bottom: -4px; width: 6px; height: 6px; background: #217346; border: 1px solid #fff; border-right: 0; border-bottom: 0; }
.end { height: 18px; }
.end th, .end td { padding-bottom: 0; border-bottom: 0; line-height: 18px; }
.vscroll { width: 21px; display: flex; flex-direction: column; padding: 2px 3px 0; }
.sb { width: 15px; height: 15px; background: #fff; border: 1px solid #ababab; }
.track { flex: 1; background: #dadada; }
.thumb { height: 58%; background: #fff; border: 1px solid #ababab; }

/* sheet tabs */
.sheetbar { flex: none; height: 27px; display: flex; align-items: center; }
.nav { width: 28px; font-size: 8px; color: #bbb; }
.nav:first-child { margin-left: 15px; }
.sheettab { align-self: flex-start; width: 89px; height: 25px; margin: -1px 0 0 29px; background: #fff; color: #217346; border: 1px solid #9b9b9b; border-top: 0; border-bottom: 2px solid #217346; font-size: 13px; font-feature-settings: normal; position: relative; }
.add { margin-left: 33px; }
.hd { margin-left: auto; }
.hscroll { width: 512px; display: flex; margin-right: 18px; height: 15px; }
.htrack { flex: 1; background: #dadada; }
.hthumb { width: 93%; height: 15px; background: #fff; border: 1px solid #ababab; }

/* status bar */
.status { flex: none; height: 22px; display: flex; align-items: center; background: #f2f2f2; border-top: 1px solid #c6c6c6; padding: 0 8px; color: #444; }
.stats { display: flex; gap: 18px; margin-left: auto; padding-right: 18px; }
.view { width: 38px; height: 21px; }
.z { width: 14px; }
.status input { appearance: none; width: 100px; height: 12px; margin: 0; background: linear-gradient(#aaa, #aaa) center / 100% 1px no-repeat; }
.status input::-webkit-slider-thumb { appearance: none; width: 5px; height: 11px; background: #666; }
.pc { width: 41px; text-align: right; }

/* step call-outs */
.frame { position: absolute; border: 6px solid #f00; border-radius: 4px; }
.f17 { left: 56px; top: 31px; width: 65px; height: 38px; border-width: 7px; }
.f18 { left: 692px; top: 102px; width: 28px; height: 31px; }
.badge {
  position: absolute;
  width: 34px;
  height: 34px;
  border: 2px solid #f00;
  border-radius: 50%;
  background: #fff;
  box-shadow: 0 0 0 3px #fff, 1px 2px 5px 3px rgba(0, 0, 0, .35);
  color: #f00;
  font: 900 24px/30px "Noto Sans CJK JP", sans-serif;
  text-align: center;
}
.b17 { left: 142px; top: 20px; }
.b18 { left: 726px; top: 136px; }
```
